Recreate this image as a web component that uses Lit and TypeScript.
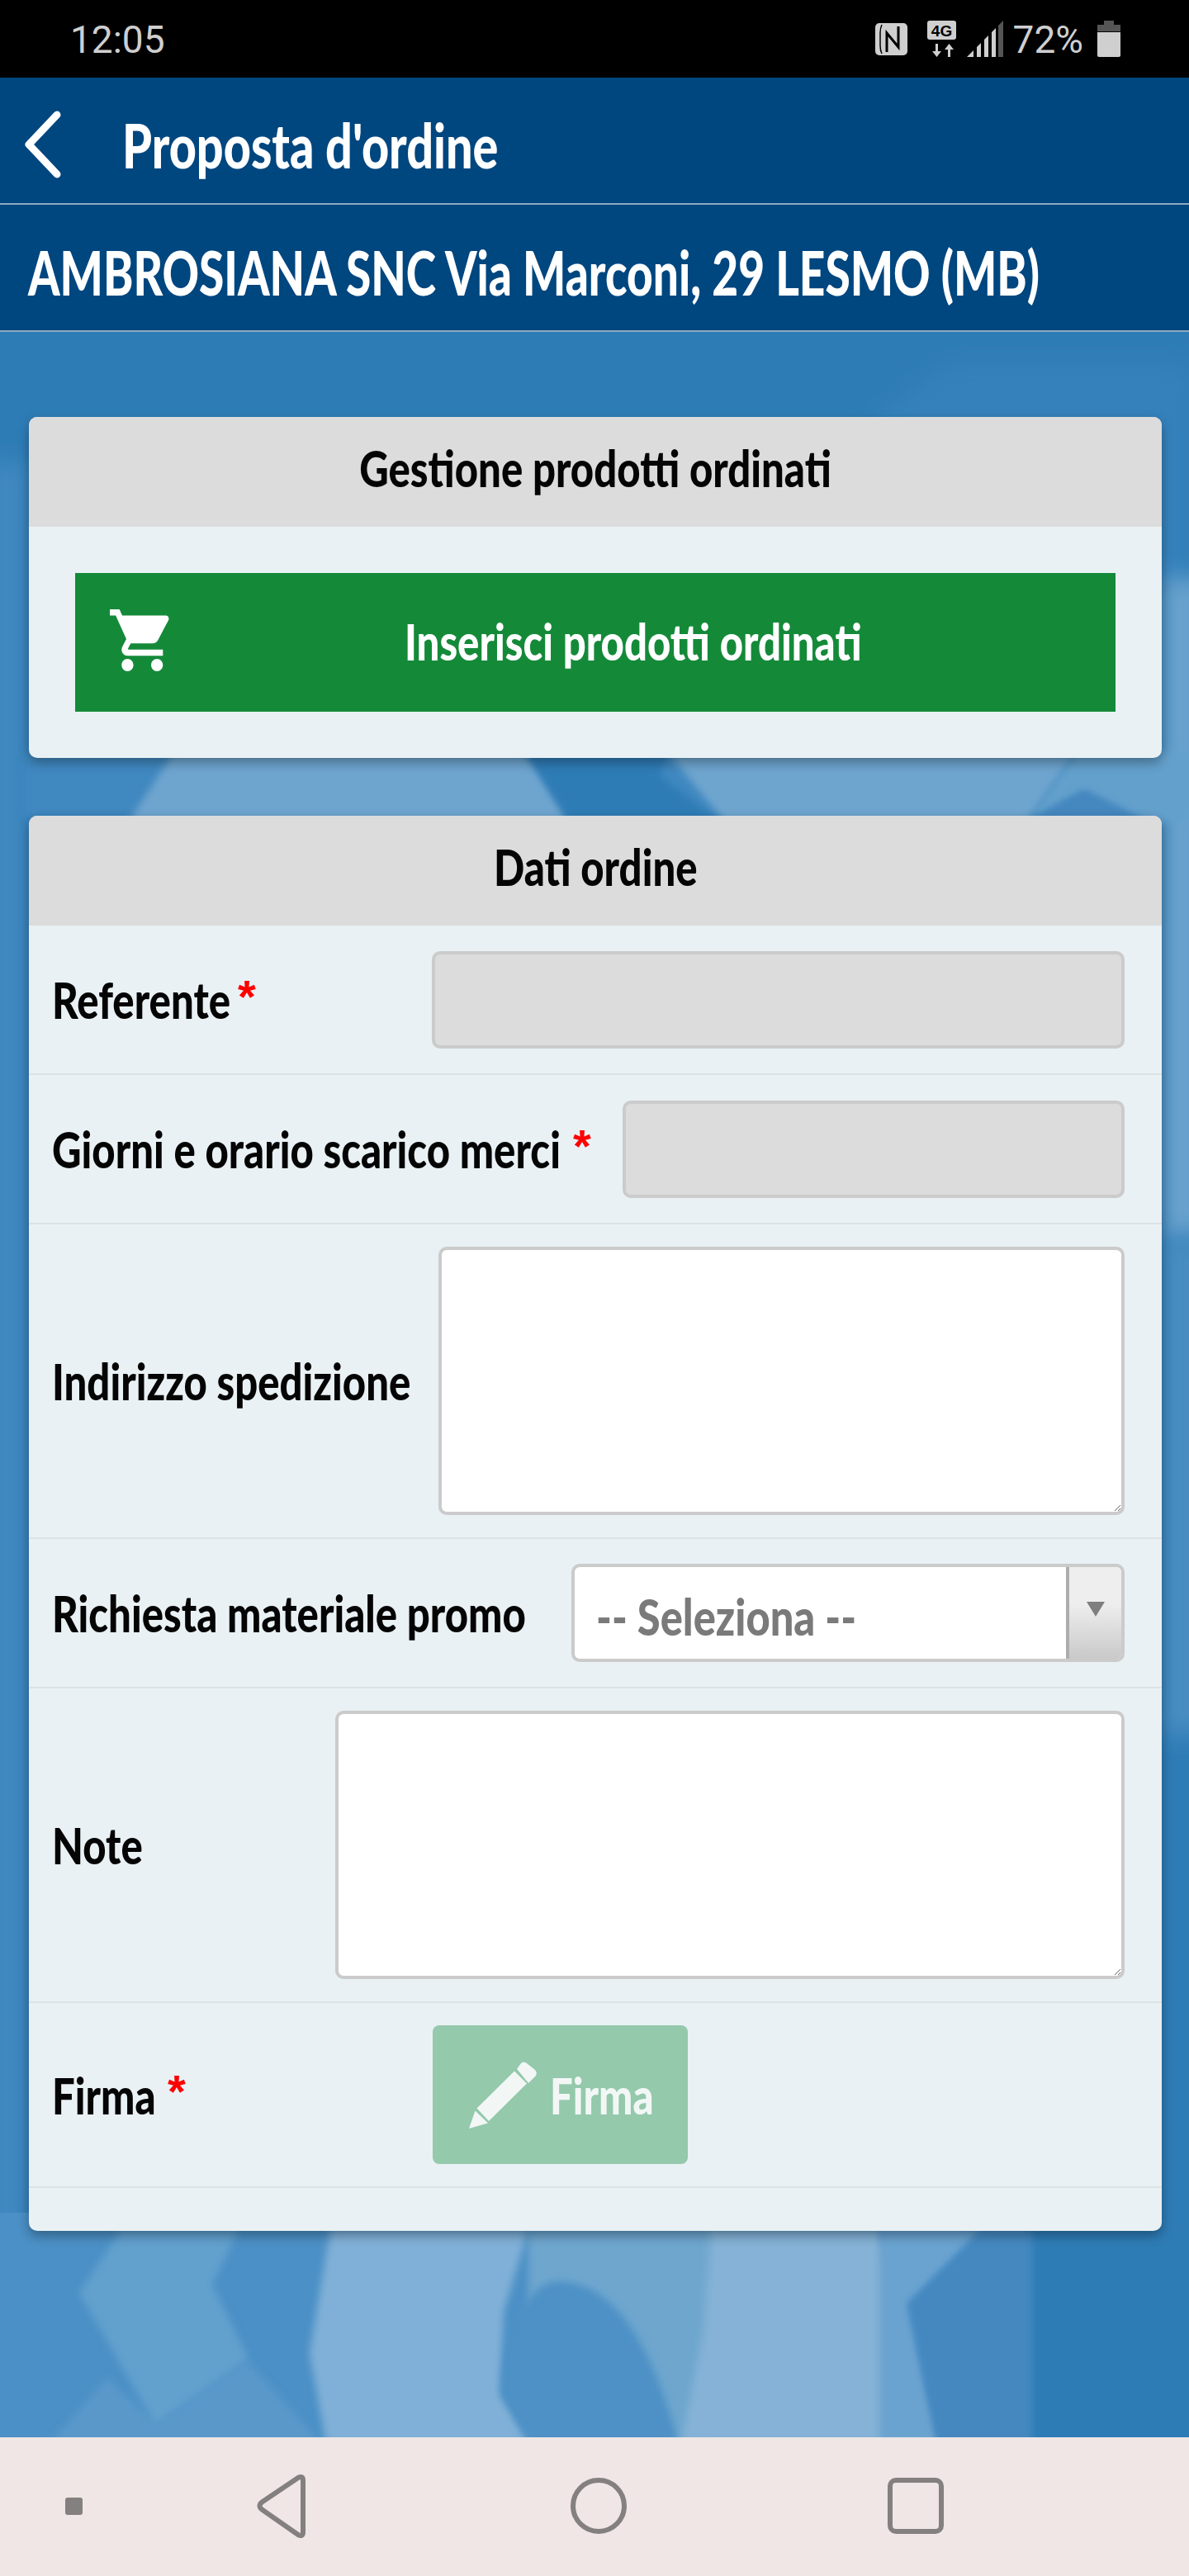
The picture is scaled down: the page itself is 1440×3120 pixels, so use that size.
import { LitElement, html, css, svg } from 'lit';
import { customElement } from 'lit/decorators.js';

type Row = { label: string; required?: boolean; kind: 'input' | 'area' | 'select' | 'sign'; width: number; textWidth: number; height: number };

// width = control width; textWidth = drawn label width (the text is squeezed with scaleX, so its box is set by hand)
const ROWS: Row[] = [
    { label: 'Referente', required: true, kind: 'input', width: 839, textWidth: 210, height: 181 },
    { label: 'Giorni e orario scarico merci', required: true, kind: 'input', width: 608, textWidth: 616, height: 181 },
    { label: 'Indirizzo spedizione', kind: 'area', width: 831, textWidth: 433, height: 381 },
    { label: 'Richiesta materiale promo', kind: 'select', width: 670, textWidth: 575, height: 181 },
    { label: 'Note', kind: 'area', width: 956, textWidth: 103, height: 381 },
    { label: 'Firma', required: true, kind: 'sign', width: 309, textWidth: 125, height: 224 },
];

const backdrop = svg`
    <svg class="backdrop-art" viewBox="0 401 1440 2551" preserveAspectRatio="none">
        <defs>
            <filter id="soft" x="-20%" y="-20%" width="140%" height="140%"><feGaussianBlur stdDeviation="5"></feGaussianBlur></filter>
            <filter id="softer" x="-20%" y="-20%" width="140%" height="140%"><feGaussianBlur stdDeviation="14"></feGaussianBlur></filter>
        </defs>
        <rect x="0" y="401" width="1440" height="2551" fill="#2e7cb6"></rect>
        <polygon points="1060,505 1150,440 1440,440 1440,1000 1060,1000" fill="#3581bb" filter="url(#softer)"></polygon>
        <polygon points="-20,560 35,560 35,2952 -20,2952" fill="#3f88c0" filter="url(#softer)"></polygon>
        <polygon points="1407,700 1460,700 1460,1500 1407,1500" fill="#6ba3cd" filter="url(#softer)"></polygon>
        <polygon points="1407,1500 1460,1500 1460,2100 1407,2100" fill="#4a8dc2" filter="url(#softer)"></polygon>

        <polygon points="30,910 1320,910 1380,990 30,990" fill="#4088c0" filter="url(#soft)"></polygon>
        <polygon points="211,910 640,910 689,995 156,995" fill="#6ea5cf" filter="url(#soft)"></polygon>
        <polygon points="808,910 1304,910 1244,995 877,995" fill="#6ea5cf" filter="url(#soft)"></polygon>
        <polygon points="634,910 808,910 800,940 872,995 689,995" fill="#2f7bb6" filter="url(#soft)"></polygon>
        <polygon points="1304,910 1450,910 1450,995 1387,995 1313,958 1244,995" fill="#64a0cc" filter="url(#soft)"></polygon>
        <polygon points="1244,995 1313,958 1387,995" fill="#4487bf" filter="url(#soft)"></polygon>

        <polygon points="0,2680 1250,2680 1134,2960 0,2960" fill="#4b90c6"></polygon>
        <polygon points="60,2960 130,2880 190,2937 300,2860 390,2960" fill="#5a98ca" filter="url(#soft)"></polygon>
        <polygon points="147,2700 289,2700 257,2767 301,2857 188,2937 96,2777" fill="#62a0ce" filter="url(#soft)"></polygon>
        <polygon points="640,2700 865,2700 850,2960 640,2960" fill="#6ea6ce" filter="url(#soft)"></polygon>
        <polygon points="400,2700 640,2700 610,2800 606,2900 645,2960 395,2960 375,2850" fill="#80b0d7" filter="url(#soft)"></polygon>
        <path d="M675 2763 C 640 2763 606 2830 608 2900 L 640 2960 L 822 2960 C 800 2880 760 2763 675 2763 Z" fill="#4e91c6" filter="url(#soft)"></path>
        <polygon points="860,2700 1065,2700 1134,2960 825,2960 850,2830" fill="#85b2d6" filter="url(#soft)"></polygon>
        <polygon points="1065,2700 1190,2700 1100,2790 1134,2960 1065,2960" fill="#6ba3d0" filter="url(#soft)"></polygon>
        <polygon points="1190,2700 1250,2700 1250,2960 1134,2960 1100,2790" fill="#4588c0" filter="url(#soft)"></polygon>
    </svg>
`;

@customElement('app-root')
export class AppRoot extends LitElement {
    static styles = css`
        :host { display: block; width: 1440px; height: 3120px; position: relative; overflow: hidden; font-family: Lato, 'Liberation Sans', sans-serif; font-weight: 900; color: #050505; }
        .status { height: 94px; background: #000; color: #cfcfcf; display: flex; align-items: center; padding: 0 83px 0 85px; font: 400 46px Roboto, sans-serif; box-sizing: border-box; position: relative; z-index: 1; }
        .status .time { flex: 1; margin-top: 2px; }
        .status .icons { display: flex; align-items: center; }
        .pct { margin: 2px 17px 0 12px; }
        .nfc { width: 39px; height: 39px; margin-right: 24px; }
        .net { width: 35px; height: 44px; margin-right: 13px; }
        .signal { width: 44px; height: 44px; }
        .battery { width: 28px; height: 44px; }

        /* squeezed text: no condensed face is installed */
        .fit { display: inline-block; white-space: nowrap; transform-origin: left center; }
        .center .fit { transform-origin: center; }

        .bar { background: #00467f; color: #fff; position: relative; z-index: 1; box-sizing: border-box; border-bottom: 2px solid #8eaac2; }
        .bar.top { height: 154px; display: flex; align-items: center; padding-left: 28px; }
        .bar.top svg { width: 47px; height: 82px; margin-right: 73px; margin-top: 10px; flex: none; }
        .bar.top h1 { margin: 0; font-size: 74px; font-weight: 900; line-height: 1; padding-top: 12px; width: 456px; }
        .bar.top h1 .fit { transform: scaleX(.777); }
        .bar.sub { height: 154px; display: flex; align-items: center; padding: 10px 0 0 34px; font-size: 74px; }
        .bar.sub .fit { transform: scaleX(.743); }

        .backdrop { position: absolute; left: 0; top: 401px; width: 1440px; height: 2551px; }
        .backdrop-art { width: 100%; height: 100%; display: block; }

        main { position: relative; padding: 103px 33px 0 35px; display: flex; flex-direction: column; gap: 70px; }
        .card { background: #e9f1f4; border-radius: 10px; box-shadow: 0 6px 14px rgba(0, 0, 0, .32); overflow: hidden; }
        .card h2 { margin: 0; height: 133px; background: #dcdcdc; display: flex; align-items: center; justify-content: center; font-size: 61px; font-weight: 900; padding-bottom: 10px; box-sizing: border-box; }
        .card h2 .fit { transform: scaleX(.805); }
        .cta-wrap { padding: 56px; }
        .cta { height: 168px; background: #148a39; color: #fff; display: flex; align-items: center; padding: 0 25px 4px 42px; box-sizing: border-box; font-size: 61px; }
        .cta svg { width: 75px; height: 75px; flex: none; margin-top: -2px; }
        .cta span.center { flex: 1; text-align: center; }
        .cta .fit { transform: scaleX(.805); }

        .row { display: flex; align-items: center; box-sizing: border-box; padding: 0 45px 0 28px; border-bottom: 2px solid #dee2e4; }
        .label { font-size: 61px; flex: none; line-height: 1; }
        .label .fit { transform: scaleX(.805); }
        .req { color: #f00; font-size: 56px; margin-left: 15px; margin-bottom: 24px; font-family: 'Liberation Sans', sans-serif; font-weight: 700; line-height: 1; height: 40px; }
        .control { flex: none; margin-left: auto; box-sizing: border-box; border: 4px solid #cbcbcb; border-radius: 10px; display: block; }
        input.control { height: 118px; background: #dcdcdc; }
        textarea.control { height: 325px; background: #fff; resize: both; }
        .select { height: 119px; background: #fff; display: flex; overflow: hidden; color: #7a7a7a; font-size: 61px; align-items: center; padding-left: 26px; }
        .select .grow { flex: 1; padding-top: 7px; }
        .select .fit { transform: scaleX(.83); }
        .select i { width: 67px; align-self: stretch; box-sizing: border-box; border-left: 4px solid #adadad; background: linear-gradient(#eee 40%, #c9c9c9); display: flex; align-items: center; justify-content: center; padding-bottom: 10px; }
        .select i::after { content: ''; border: 11px solid transparent; border-top: 18px solid #7f7f7f; border-bottom: 0; }
        .sign { flex: none; height: 168px; margin-left: auto; margin-right: 529px; background: #94c9ab; color: #f2f7f6; border-radius: 8px; display: flex; align-items: center; padding-left: 44px; box-sizing: border-box; font-size: 61px; gap: 16px; }
        .sign svg { width: 82px; height: 81px; flex: none; }
        .sign .fit { transform: scaleX(.805); }
        .spacer { height: 52px; }

        .nav { position: absolute; left: 0; top: 2952px; width: 1440px; height: 168px; background: #efe6e5; }
        .nav svg { width: 1440px; height: 168px; display: block; }
    `;

    private control(r: Row) {
        switch (r.kind) {
            case 'input': return html`<input class="control" disabled style="width:${r.width}px" />`;
            case 'area': return html`<textarea class="control" style="width:${r.width}px"></textarea>`;
            case 'select': return html`<div class="control select" style="width:${r.width}px"><span class="grow"><span class="fit">-- Seleziona --</span></span><i></i></div>`;
            default: return html`<div class="sign" style="width:${r.width}px">
                <svg viewBox="0 0 82 81" fill="currentColor">
                    <polygon points="0,81 7.5,59.5 23,74.5"></polygon>
                    <polygon points="9.5,56.5 55,11.5 70,26.5 24,72"></polygon>
                    <path d="M58 9 L63 2 Q66 -1 70 2 L80 10 Q83 13 81 17 L72 26 Z"></path>
                </svg><span class="fit">Firma</span></div>`;
        }
    }

    render() {
        return html`
            <div class="status">
                <span class="time">12:05</span>
                <div class="icons">
                    <svg class="nfc" viewBox="0 0 39 39">
                        <rect width="39" height="39" rx="5" fill="#cfcfcf"></rect>
                        <path d="M8 2 Q6 6 6 12 V27 Q6 33 8 37" stroke="#000" stroke-width="1.5" fill="none"></path>
                        <path d="M14 35 V12 L28 29 V4" stroke="#000" stroke-width="3" fill="none"></path>
                    </svg>
                    <svg class="net" viewBox="0 0 35 44">
                        <rect width="35" height="23" rx="3" fill="#cfcfcf"></rect>
                        <text x="17.5" y="18.5" text-anchor="middle" font-family="Liberation Sans" font-weight="700" font-size="19" fill="#000">4G</text>
                        <path d="M10 28 H13 V37 H17 L11.5 44 L6 37 H10 Z M25 44 H28 V35 H32 L26.5 28 L21 35 H25 Z" fill="#cfcfcf"></path>
                    </svg>
                    <svg class="signal" viewBox="0 0 44 44">
                        <polygon points="0,44 8,44 8,36" fill="#cfcfcf"></polygon>
                        <polygon points="12,44 17,44 17,27 12,32" fill="#cfcfcf"></polygon>
                        <polygon points="21,44 26,44 26,18 21,23" fill="#cfcfcf"></polygon>
                        <polygon points="30,44 35,44 35,9 30,14" fill="#cfcfcf"></polygon>
                        <polygon points="38,44 44,44 44,0 38,6" fill="#555"></polygon>
                    </svg>
                    <span class="pct">72%</span>
                    <svg class="battery" viewBox="0 0 28 44">
                        <path d="M8 0 H20 V5 H28 V13 H0 V5 H8 Z" fill="#555"></path>
                        <path d="M0 14 H28 V42 Q28 44 26 44 H2 Q0 44 0 42 Z" fill="#cfcfcf"></path>
                    </svg>
                </div>
            </div>
            <div class="bar top">
                <svg viewBox="0 0 47 82"><path d="M41 5 L7 41 L41 77" fill="none" stroke="#fff" stroke-width="9" stroke-linejoin="round" stroke-linecap="round"></path></svg>
                <h1><span class="fit">Proposta d'ordine</span></h1>
            </div>
            <div class="bar sub"><span class="fit">AMBROSIANA SNC Via Marconi, 29 LESMO (MB)</span></div>
            <div class="backdrop">${backdrop}</div>
            <main>
                <section class="card">
                    <h2 class="center"><span class="fit">Gestione prodotti ordinati</span></h2>
                    <div class="cta-wrap">
                        <div class="cta">
                            <svg viewBox="1 2 21 20" fill="#fff" preserveAspectRatio="none"><path d="M7 18c-1.1 0-1.99.9-1.99 2S5.9 22 7 22s2-.9 2-2-.9-2-2-2zM1 2v2h2l3.6 7.59-1.35 2.45c-.16.28-.25.61-.25.96 0 1.1.9 2 2 2h12v-2H7.42c-.14 0-.25-.11-.25-.25l.03-.12.9-1.63h7.45c.75 0 1.41-.41 1.75-1.03l3.58-6.47c.08-.14.12-.31.12-.48 0-.55-.45-1-1-1H5.21l-.94-2H1zm16 16c-1.1 0-1.99.9-1.99 2s.89 2 1.99 2 2-.9 2-2-.9-2-2-2z"></path></svg>
                            <span class="center"><span class="fit">Inserisci prodotti ordinati</span></span>
                        </div>
                    </div>
                </section>
                <section class="card">
                    <h2 class="center"><span class="fit">Dati ordine</span></h2>
                    ${ROWS.map(r => html`
                        <div class="row" style="height:${r.height}px">
                            <span class="label" style="width:${r.textWidth}px"><span class="fit">${r.label}</span></span>
                            ${r.required ? html`<span class="req">*</span>` : ''}
                            ${this.control(r)}
                        </div>
                    `)}
                    <div class="spacer"></div>
                </section>
            </main>
            <div class="nav">
                <svg viewBox="0 0 1440 168">
                    <rect x="79" y="73" width="21" height="21" rx="3" fill="#848080"></rect>
                    <path d="M367 52 V115 Q367 121 361 118 L318 88 Q311 83 318 78 L361 49 Q367 46 367 52 Z" fill="none" stroke="#848080" stroke-width="6" stroke-linejoin="round"></path>
                    <circle cx="725" cy="83" r="31" fill="none" stroke="#848080" stroke-width="6"></circle>
                    <rect x="1078" y="52" width="62" height="62" rx="7" fill="none" stroke="#848080" stroke-width="6"></rect>
                </svg>
            </div>
        `;
    }
}
